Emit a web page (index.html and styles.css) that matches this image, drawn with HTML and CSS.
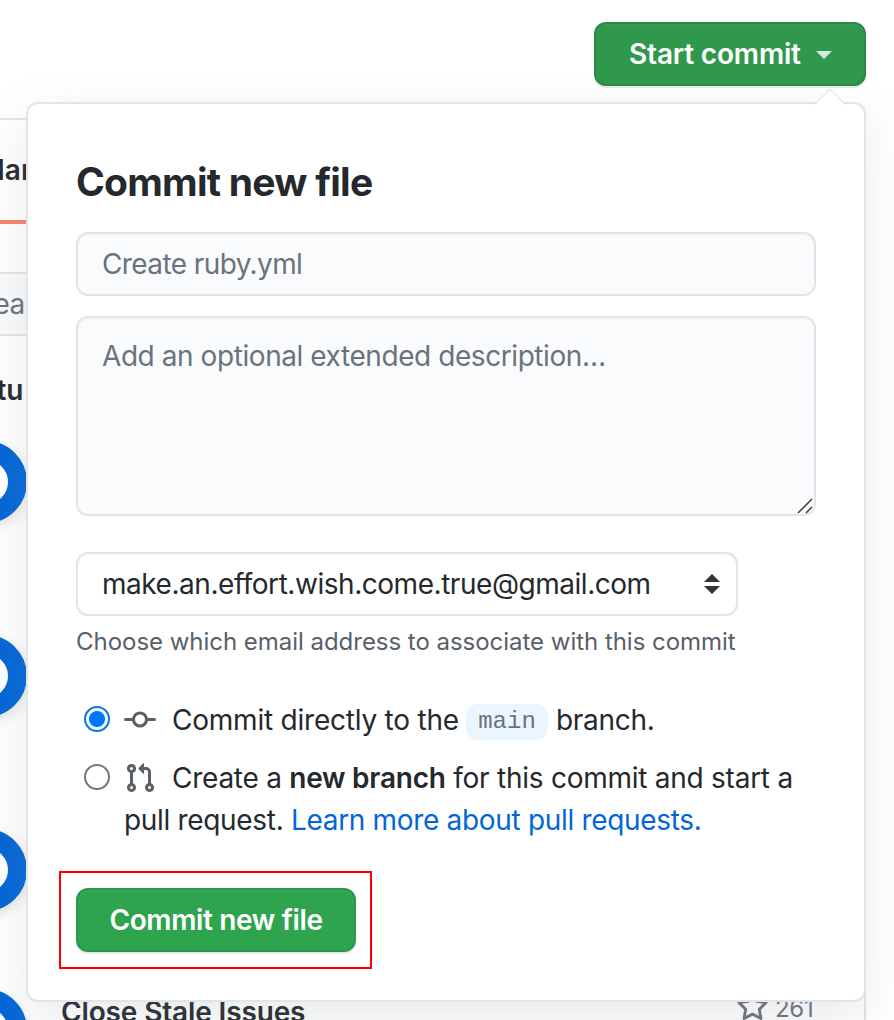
FILE: index.html
```html
<!DOCTYPE html>
<html lang="en">
<head>
<meta charset="utf-8">
<title>Commit new file</title>
<link rel="stylesheet" href="styles.css">
</head>
<body>
<div class="page">
  <header class="toolbar">
    <button class="btn start"><span class="start-label">Start commit</span><span class="caret"></span></button>
  </header>
  <section class="sidebar">
    <div class="tab">Mar</div>
    <div class="search">Sear</div>
    <div class="featured">Featu</div>
    <div class="actions">
      <span class="ring"></span><span class="ring"></span><span class="ring"></span><span class="ring last"></span>
    </div>
    <div class="listing">
      <span class="listing-name">Close Stale Issues</span>
      <svg class="star" viewBox="0 0 16 16"><path d="M8 .9 10.15 5.3 15 6 11.5 9.4 12.35 14.2 8 11.95 3.65 14.2 4.5 9.4 1 6 5.85 5.3Z" fill="none" stroke="currentColor" stroke-width="1.5" stroke-linejoin="round"/></svg>
      <span class="listing-stars">261</span>
    </div>
  </section>

  <main class="popover">
    <svg class="arrow" viewBox="0 0 32 16"><path d="M0 16 16 0 32 16Z" fill="#fff"/><path d="M.5 15.5 16 .5 31.5 15.5" fill="none" stroke="#d1d5da" stroke-width="1"/></svg>
    <h1 class="title">Commit new file</h1>
    <div class="field summary">Create ruby.yml</div>
    <div class="field description"><span class="hint">Add an optional extended description…</span>
      <svg class="grip" viewBox="0 0 16 16"><path d="M1 15 15 1M9 15l6-6" stroke="#444" stroke-width="1.6" fill="none"/></svg>
    </div>
    <div class="select"><span class="email">make.an.effort.wish.come.true@gmail.com</span>
      <svg class="sort" viewBox="0 0 16 20"><path d="M0 8 8 0l8 8ZM0 12h16l-8 8Z" fill="#333"/></svg>
    </div>
    <p class="note">Choose which email address to associate with this commit</p>
    <div class="option first">
      <span class="radio checked"></span>
      <svg class="icon commit" viewBox="0 0 16 16"><path fill-rule="evenodd" d="M10.5 7.75a2.5 2.5 0 1 1-5 0 2.5 2.5 0 0 1 5 0zm1.43.75a4.002 4.002 0 0 1-7.86 0H.75a.75.75 0 1 1 0-1.5h3.32a4.001 4.001 0 0 1 7.86 0h3.32a.75.75 0 1 1 0 1.5h-3.32z"/></svg>
      <span class="line direct">Commit directly to the</span><code class="branch">main</code><span class="line tail">branch.</span>
    </div>
    <div class="option second">
      <span class="radio"></span>
      <svg class="icon pull" viewBox="0 0 16 16"><path fill-rule="evenodd" d="M7.177 3.073L9.573.677A.25.25 0 0 1 10 .854v4.792a.25.25 0 0 1-.427.177L7.177 3.427a.25.25 0 0 1 0-.354zM3.75 2.5a.75.75 0 1 0 0 1.5.75.75 0 0 0 0-1.5zm-2.25.75a2.25 2.25 0 1 1 3 2.122v5.256a2.251 2.251 0 1 1-1.5 0V5.372A2.25 2.25 0 0 1 1.5 3.25zM11 2.5h-1V4h1a1 1 0 0 1 1 1v5.628a2.251 2.251 0 1 0 1.5 0V5A2.5 2.5 0 0 0 11 2.5zm1 10.25a.75.75 0 1 1 1.5 0 .75.75 0 0 1-1.5 0zM3.75 12a.75.75 0 1 0 0 1.5.75.75 0 0 0 0-1.5z"/></svg>
      <span class="line create">Create a <b class="strong">new branch</b> for this commit and start a</span>
    </div>
    <div class="line more">pull request. <a class="link">Learn more about pull requests.</a></div>
    <div class="highlight"><button class="btn submit">Commit new file</button></div>
  </main>
</div>
</body>
</html>
```
FILE: styles.css
```css
* { box-sizing: border-box; }
body { margin: 0; background: #fff; color: #24292e; font-family: Inter, "Liberation Sans", sans-serif; font-size: 28px; }
.page { position: relative; width: 894px; height: 1020px; overflow: hidden; }
.toolbar { height: 118px; padding: 22px 28px 0 0; display: flex; justify-content: flex-end; align-items: flex-start; }

.btn { font: 600 28px/36px Inter, "Liberation Sans", sans-serif; color: #fff; background: #2ea44f; height: 64px; border: 2px solid #2c974b; border-radius: 12px; box-shadow: 0 2px 0 rgba(27,31,35,.1), inset 0 2px 0 rgba(255,255,255,.03); padding: 0; white-space: nowrap; }
.start { width: 272px; display: flex; align-items: center; padding-left: 33px; background: #2f984d; border-color: #2c8a47; letter-spacing: -.17px; }
.start-label { width: 187px; text-align: left; }
.caret { border: 8px solid transparent; border-top-color: rgba(255,255,255,.8); border-bottom: 0; margin-top: 2px; }

.sidebar { width: 866px; height: 930px; border: 2px solid #e1e4e8; border-left: 0; overflow: hidden; display: flex; flex-direction: column; }
.tab { width: 200px; height: 104px; padding-top: 32px; margin-left: -21px; font-weight: 600; line-height: 36px; border-bottom: 4px solid #f9826c; flex: none; }
.search { height: 64px; margin: 48px 0 0 -46px; padding-left: 20px; width: 800px; border: 2px solid #e1e4e8; background: #fafbfc; color: #6a737d; line-height: 60px; letter-spacing: -.5px; flex: none; }
.featured { margin: 34px 0 0 -52px; font-weight: 600; line-height: 40px; height: 40px; flex: none; }
.actions { height: 590px; margin-top: 31px; margin-left: -55px; display: flex; flex-direction: column; gap: 112px; flex: none; }
.ring { flex: none; width: 82px; height: 82px; border-radius: 50%; border: 19px solid #0366d6; box-shadow: 0 4px 12px rgba(27,31,35,.15); }
.last { margin-top: -34px; }
.listing { display: flex; align-items: flex-start; margin-top: -39px; padding-left: 61px; height: 40px; line-height: 40px; flex: none; }
.listing-name { font-weight: 600; width: 676px; letter-spacing: -.14px; }
.star { width: 31px; height: 31px; color: #6a737d; margin-top: -1px; }
.listing-stars { font-size: 24px; line-height: 34px; color: #6a737d; margin-left: 7px; letter-spacing: -.3px; }

.popover { position: absolute; left: 26px; top: 102px; width: 840px; height: 900px; background: #fff; border: 2px solid #e1e4e8; border-radius: 12px; box-shadow: 0 16px 48px rgba(140,148,156,.2); padding: 54px 48px 0; display: flex; flex-direction: column; }
.arrow { position: absolute; right: 18px; top: -15px; width: 32px; height: 16px; }
.title { margin: 0; font-size: 39px; line-height: 48px; height: 74px; font-weight: 650; letter-spacing: -.75px; flex: none; white-space: nowrap; }
.field { background: #fafbfc; border: 2px solid #e1e4e8; border-radius: 12px; color: #6a737d; padding: 0 24px; box-shadow: inset 0 2px 0 rgba(225,228,232,.2); flex: none; white-space: nowrap; }
.summary { height: 64px; line-height: 60px; letter-spacing: -.6px; }
.description { height: 200px; margin-top: 20px; padding-top: 17px; line-height: 42px; display: flex; justify-content: space-between; padding-right: 0; letter-spacing: -.43px; }
.grip { width: 16px; height: 16px; align-self: flex-end; margin-right: 1px; }
.select { margin-top: 36px; width: 662px; height: 64px; border: 2px solid #e1e4e8; border-radius: 12px; box-shadow: inset 0 2px 0 rgba(225,228,232,.2); display: flex; align-items: center; justify-content: space-between; padding: 0 16px 0 24px; flex: none; white-space: nowrap; letter-spacing: -.46px; }
.sort { width: 16px; height: 20px; }
.note { margin: 8px 0 0; color: #586069; font-size: 24px; line-height: 36px; letter-spacing: -.03px; white-space: nowrap; }
.option { display: flex; align-items: center; height: 42px; flex: none; white-space: nowrap; }
.first { margin-top: 39px; }
.second { margin-top: 16px; }
.radio { width: 26px; height: 26px; margin: -2px 14px 0 8px; border: 2px solid #767676; border-radius: 50%; flex: none; }
.checked { border-color: #0075ff; background: radial-gradient(circle, #0075ff 7.5px, #fff 8.5px); }
.icon { width: 32px; height: 32px; fill: #586069; margin-right: 16px; flex: none; }
.line { line-height: 42px; white-space: nowrap; }
.direct { width: 294px; letter-spacing: -.22px; }
.tail { letter-spacing: -.3px; }
.branch { width: 82px; height: 36px; border-radius: 12px; background: #eaf5ff; color: #6a737d; font: 24px/36px "Liberation Mono", monospace; text-align: center; margin: 3px 8px 0 0; }
.create { letter-spacing: -.25px; }
.strong { font-weight: 600; }
.more { margin-left: 48px; letter-spacing: -.32px; }
.link { color: #0366d6; }
.highlight { width: 313px; height: 98px; margin: 30px 0 0 -17px; border: 2px solid #f00; padding: 15px; flex: none; }
.submit { width: 280px; display: block; letter-spacing: -.35px; }
```
